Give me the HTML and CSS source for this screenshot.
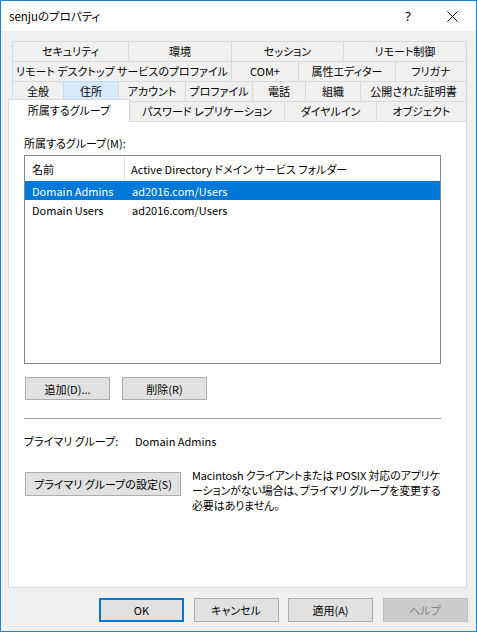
FILE: index.html
```html
<!DOCTYPE html>
<html lang="ja">
<head>
<meta charset="utf-8">
<link rel="stylesheet" href="styles.css">
</head>
<body>
<div class="window">
  <div class="titlebar">
    <span class="title">senjuのプロパティ</span>
    <span class="help">?</span>
    <span class="close"><svg width="11" height="11" viewBox="0 0 11 11"><path d="M0.5 0.5 L10.5 10.5 M10.5 0.5 L0.5 10.5" stroke="#000" stroke-width="1" fill="none"/></svg></span>
  </div>
  <div class="body">
    <div class="tabs">
      <div class="tabrow r1">
        <div class="tab">セキュリティ</div>
        <div class="tab">環境</div>
        <div class="tab">セッション</div>
        <div class="tab">リモート制御</div>
      </div>
      <div class="tabrow r2">
        <div class="tab">リモート デスクトップ サービスのプロファイル</div>
        <div class="tab">COM+</div>
        <div class="tab">属性エディター</div>
        <div class="tab">フリガナ</div>
      </div>
      <div class="tabrow r3">
        <div class="tab">全般</div>
        <div class="tab hover">住所</div>
        <div class="tab">アカウント</div>
        <div class="tab">プロファイル</div>
        <div class="tab">電話</div>
        <div class="tab">組織</div>
        <div class="tab">公開された証明書</div>
      </div>
      <div class="tabrow r4">
        <div class="tab active">所属するグループ</div>
        <div class="tab">パスワード レプリケーション</div>
        <div class="tab">ダイヤルイン</div>
        <div class="tab">オブジェクト</div>
      </div>
    </div>
    <div class="panel">
      <div class="label">所属するグループ(M):</div>
      <div class="list">
        <div class="lhead">
          <div class="c1">名前</div>
          <div class="c2">Active Directory ドメイン サービス フォルダー</div>
        </div>
        <div class="lrow sel">
          <div class="c1">Domain Admins</div>
          <div class="c2">ad2016.com/Users</div>
        </div>
        <div class="lrow">
          <div class="c1">Domain Users</div>
          <div class="c2">ad2016.com/Users</div>
        </div>
      </div>
      <div class="btnrow">
        <button class="btn small">追加(D)...</button>
        <button class="btn small">削除(R)</button>
      </div>
      <div class="sep"></div>
      <div class="primary">
        <span class="plabel">プライマリ グループ:</span>
        <span>Domain Admins</span>
      </div>
      <div class="setrow">
        <button class="btn wide">プライマリ グループの設定(S)</button>
        <p class="note">Macintosh クライアントまたは POSIX 対応のアプリケ<br>ーションがない場合は、プライマリ グループを変更する<br>必要はありません。</p>
      </div>
    </div>
    <div class="footer">
      <button class="btn fbtn default">OK</button>
      <button class="btn fbtn">キャンセル</button>
      <button class="btn fbtn">適用(A)</button>
      <button class="btn fbtn disabled">ヘルプ</button>
    </div>
  </div>
</div>
</body>
</html>
```
FILE: styles.css
```css
* { box-sizing: border-box; }
html, body { margin: 0; padding: 0; background: #ffffff; }
body {
  font-family: "Noto Sans CJK JP", "Noto Sans", sans-serif;
  font-size: 11px;
  color: #000;
  font-feature-settings: "palt";
}
.window {
  width: 477px;
  height: 632px;
  border: 1px solid #1883d7;
  display: flex;
  flex-direction: column;
  background: #f0f0f0;
}
.titlebar {
  height: 30px;
  background: #fff;
  display: flex;
  align-items: center;
  padding-left: 8px;
  flex: none;
  font-size: 11.5px;
}
.title { flex: 1; line-height: 14px; }
.help { width: 14px; text-align: center; margin-right: 32px; font-size: 13px; font-family: "Noto Sans", sans-serif; }
.close { width: 11px; height: 11px; margin-right: 18px; display: flex; }
.body {
  flex: 1;
  padding: 10px 0 0 7px;
  display: flex;
  flex-direction: column;
}
.tabs { width: 459px; display: flex; flex-direction: column; }
.tabrow {
  display: flex;
  height: 20px;
  padding-left: 4px;
}
.tab {
  height: 20px;
  border: 1px solid #d9d9d9;
  border-bottom: none;
  margin-right: -1px;
  background: #f0f0f0;
  display: flex;
  align-items: center;
  justify-content: center;
  line-height: 14px;
  white-space: nowrap;
  padding-bottom: 1px;
}
.tab.hover { background: #d8eaf9; border-color: #c0dcf3; }
.r1 .tab:nth-child(1) { width: 117px; }
.r1 .tab:nth-child(2) { width: 104px; }
.r1 .tab:nth-child(3) { width: 113px; }
.r1 .tab:nth-child(4) { width: 124px; }
.r2 .tab:nth-child(1) { width: 220px; }
.r2 .tab:nth-child(2) { width: 68px; }
.r2 .tab:nth-child(3) { width: 98px; }
.r2 .tab:nth-child(4) { width: 72px; }
.r3 .tab:nth-child(1) { width: 52px; }
.r3 .tab:nth-child(2) { width: 56px; }
.r3 .tab:nth-child(3) { width: 68px; }
.r3 .tab:nth-child(4) { width: 68px; }
.r3 .tab:nth-child(5) { width: 54px; }
.r3 .tab:nth-child(6) { width: 56px; }
.r3 .tab:nth-child(7) { width: 107px; }
.r4 .tab:nth-child(2) { width: 156px; }
.r4 .tab:nth-child(3) { width: 93px; }
.r4 .tab:nth-child(4) { width: 91px; }
.tab.active {
  width: 122px;
  height: 23px;
  margin-top: -2px;
  margin-left: -4px;
  margin-right: -1px;
  background: #fff;
  z-index: 2;
  padding-bottom: 2px;
}
.panel {
  width: 459px;
  height: 467px;
  border: 1px solid #d9d9d9;
  background: #fff;
  padding: 14px 0 0 15px;
  display: flex;
  flex-direction: column;
  flex: none;
}
.label { line-height: 14px; margin-bottom: 5px; }
.list {
  width: 417px;
  height: 209px;
  border: 1px solid #828790;
  flex: none;
}
.lhead, .lrow { display: flex; }
.lhead { height: 25px; align-items: center; }
.lrow { height: 19px; align-items: center; }
.c1 { width: 100px; padding-left: 7px; white-space: nowrap; }
.c2 { padding-left: 7px; white-space: nowrap; }
.lhead .c1 { border-right: 1px solid #e5e5e5; height: 25px; display: flex; align-items: center; }
.lhead .c2 { padding-left: 6px; }
.lrow.sel { background: #0078d7; color: #fff; }
.btn {
  font-family: inherit;
  font-size: 11px;
  font-feature-settings: "palt";
  color: #000;
  background: #e1e1e1;
  border: 1px solid #adadad;
  height: 24px;
  padding: 0;
  margin: 0;
  line-height: 14px;
}
.btnrow { display: flex; gap: 12px; margin-top: 13px; padding-left: 1px; }
.btn.small { width: 85px; height: 23px; }
.sep { width: 417px; height: 1px; background: #a0a0a0; margin-top: 18px; flex: none; }
.primary { display: flex; line-height: 14px; margin-top: 15px; }
.plabel { width: 111px; }
.setrow { display: flex; align-items: flex-start; margin-top: 24px; padding-left: 1px; }
.btn.wide { width: 156px; flex: none; }
.note { margin: -4px 0 0 11px; line-height: 15px; white-space: nowrap; letter-spacing: -0.15px; }
.footer {
  display: flex;
  gap: 9.5px;
  margin-top: 10px;
  padding-left: 91px;
}
.btn.fbtn { width: 85px; height: 24px; }
.btn.default { border: 2px solid #0078d7; }
.btn.disabled { background: #cccccc; border-color: #bfbfbf; color: #838383; }
```
